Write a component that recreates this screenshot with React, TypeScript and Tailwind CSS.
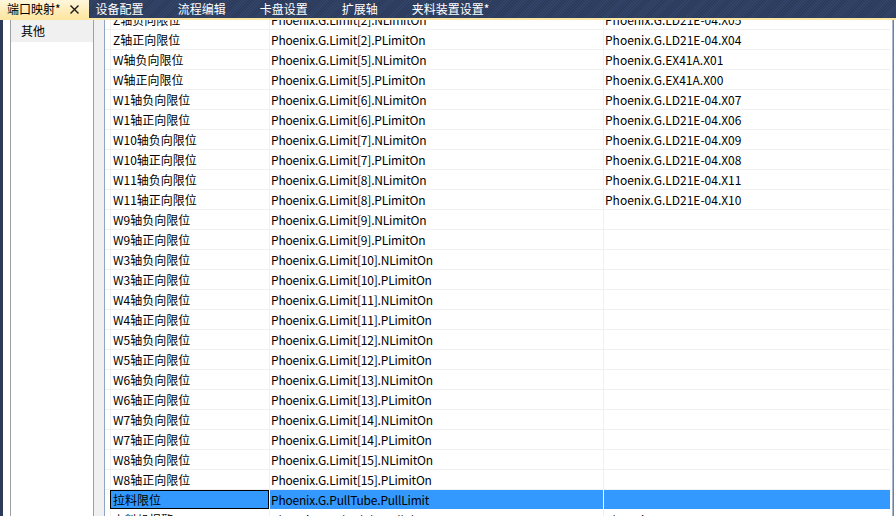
interface Row {
  name: string
  variable: string
  port: string
}

const rows: Row[] = [
  { name: 'Z轴负向限位', variable: 'Phoenix.G.Limit[2].NLimitOn', port: 'Phoenix.G.LD21E-04.X05' },
  { name: 'Z轴正向限位', variable: 'Phoenix.G.Limit[2].PLimitOn', port: 'Phoenix.G.LD21E-04.X04' },
  { name: 'W轴负向限位', variable: 'Phoenix.G.Limit[5].NLimitOn', port: 'Phoenix.G.EX41A.X01' },
  { name: 'W轴正向限位', variable: 'Phoenix.G.Limit[5].PLimitOn', port: 'Phoenix.G.EX41A.X00' },
  { name: 'W1轴负向限位', variable: 'Phoenix.G.Limit[6].NLimitOn', port: 'Phoenix.G.LD21E-04.X07' },
  { name: 'W1轴正向限位', variable: 'Phoenix.G.Limit[6].PLimitOn', port: 'Phoenix.G.LD21E-04.X06' },
  { name: 'W10轴负向限位', variable: 'Phoenix.G.Limit[7].NLimitOn', port: 'Phoenix.G.LD21E-04.X09' },
  { name: 'W10轴正向限位', variable: 'Phoenix.G.Limit[7].PLimitOn', port: 'Phoenix.G.LD21E-04.X08' },
  { name: 'W11轴负向限位', variable: 'Phoenix.G.Limit[8].NLimitOn', port: 'Phoenix.G.LD21E-04.X11' },
  { name: 'W11轴正向限位', variable: 'Phoenix.G.Limit[8].PLimitOn', port: 'Phoenix.G.LD21E-04.X10' },
  { name: 'W9轴负向限位', variable: 'Phoenix.G.Limit[9].NLimitOn', port: '' },
  { name: 'W9轴正向限位', variable: 'Phoenix.G.Limit[9].PLimitOn', port: '' },
  { name: 'W3轴负向限位', variable: 'Phoenix.G.Limit[10].NLimitOn', port: '' },
  { name: 'W3轴正向限位', variable: 'Phoenix.G.Limit[10].PLimitOn', port: '' },
  { name: 'W4轴负向限位', variable: 'Phoenix.G.Limit[11].NLimitOn', port: '' },
  { name: 'W4轴正向限位', variable: 'Phoenix.G.Limit[11].PLimitOn', port: '' },
  { name: 'W5轴负向限位', variable: 'Phoenix.G.Limit[12].NLimitOn', port: '' },
  { name: 'W5轴正向限位', variable: 'Phoenix.G.Limit[12].PLimitOn', port: '' },
  { name: 'W6轴负向限位', variable: 'Phoenix.G.Limit[13].NLimitOn', port: '' },
  { name: 'W6轴正向限位', variable: 'Phoenix.G.Limit[13].PLimitOn', port: '' },
  { name: 'W7轴负向限位', variable: 'Phoenix.G.Limit[14].NLimitOn', port: '' },
  { name: 'W7轴正向限位', variable: 'Phoenix.G.Limit[14].PLimitOn', port: '' },
  { name: 'W8轴负向限位', variable: 'Phoenix.G.Limit[15].NLimitOn', port: '' },
  { name: 'W8轴正向限位', variable: 'Phoenix.G.Limit[15].PLimitOn', port: '' },
  { name: '拉料限位', variable: 'Phoenix.G.PullTube.PullLimit', port: '' },
  { name: '上料机报警', variable: 'Phoenix.G.Schedule.PullAlarm', port: 'Phoenix.G.LD21E-04.X05' }
]

const tabs = ['设备配置', '流程编辑', '卡盘设置', '扩展轴', '夹料装置设置*']

const CloseGlyph = () => (
  <svg viewBox="0 0 9 9" className="ml-[9px] h-[9px] w-[9px]" fill="none" stroke="#1a1a1a" strokeWidth="1.4">
    <path d="M0.5 0.5 L8.5 8.5 M8.5 0.5 L0.5 8.5" />
  </svg>
)

const TabBar = () => (
  <div className="flex h-[18px] shrink-0 items-stretch bg-[repeating-linear-gradient(135deg,#2b3b59_0px,#2b3b59_1px,#32446a_1px,#32446a_2px)] text-white">
    <div className="flex items-center bg-[linear-gradient(#fff7dc,#fde6a2)] pl-[7px] pr-[10px] text-black">
      <span>端口映射*</span>
      <CloseGlyph />
    </div>
    {tabs.map((t) => (
      <div key={t} className="flex items-center pl-[7px] pr-[27px]">
        {t}
      </div>
    ))}
  </div>
)

const TableRow = ({ row, selected }: { row: Row; selected?: boolean }) => (
  <div className={`flex h-[20px] shrink-0 border-b ${selected ? 'border-white' : 'border-[#f0f0f0]'}`}>
    <div className="w-[5px] shrink-0" />
    <div
      className={`flex w-[159px] shrink-0 items-center border-l border-[#f0f0f0] ${
        selected ? 'bg-[#3399ff] outline outline-1 -outline-offset-1 outline-black' : ''
      }`}
    >
      <span className="pl-[2px] whitespace-nowrap">{row.name}</span>
    </div>
    <div
      className={`flex w-[334px] shrink-0 items-center border-l ${
        selected ? 'border-white bg-[#3399ff]' : 'border-[#f0f0f0]'
      }`}
    >
      <span className="pl-[1px] tracking-[-0.2px] whitespace-nowrap">{row.variable}</span>
    </div>
    <div className={`flex flex-1 items-center border-l ${selected ? 'border-white bg-[#3399ff]' : 'border-[#f0f0f0]'}`}>
      <span className="pl-[1px] whitespace-nowrap">{row.port}</span>
    </div>
  </div>
)

export default function App() {
  return (
    <div className="flex h-[516px] w-[896px] flex-col overflow-hidden bg-[#2b3b58] font-['Noto_Sans_CJK_SC',sans-serif] text-[12px] leading-none text-black">
      <TabBar />
      <div className="h-[2px] shrink-0 bg-[#fde6a2]" />
      <div className="flex min-h-0 flex-1 pl-[3px]">
        <div className="w-[8px] shrink-0 border-r border-[#a0a0a0] bg-white" />
        <div className="w-[83px] shrink-0 border-r border-[#a0a0a0] bg-white">
          <div className="flex h-[22px] items-center bg-[#f0f0f0] pl-[10px]">其他</div>
        </div>
        <div className="w-[10px] shrink-0 bg-[#f0f0f0]" />
        <div className="flex min-w-0 flex-1 border-l border-[#8fa5c7] bg-white">
          <div className="flex min-w-0 flex-1 flex-col overflow-hidden">
            <div className="-mt-[10px] flex flex-col">
              {rows.map((r) => (
                <TableRow key={r.name} row={r} selected={r.name === '拉料限位'} />
              ))}
            </div>
          </div>
          <div className="w-[2px] shrink-0 bg-white" />
          <div className="w-[1px] shrink-0 bg-[#a9b6cc]" />
          <div className="w-[1px] shrink-0 bg-[#6d80a3]" />
          <div className="w-[2px] shrink-0 bg-white" />
        </div>
      </div>
    </div>
  )
}
